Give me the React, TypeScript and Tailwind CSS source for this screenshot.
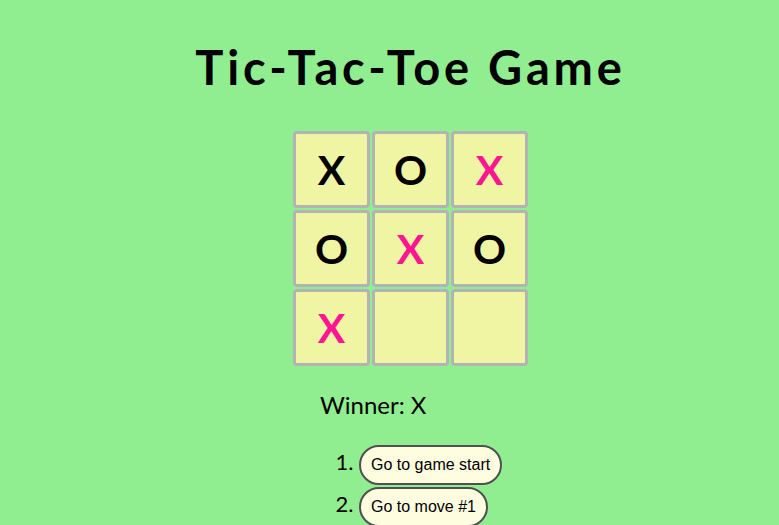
const squares: (string | null)[] = ['X', 'O', 'X', 'O', 'X', 'O', 'X', null, null]

function Square({ value, index }: { value: string | null; index: number }) {
  // first X on the board is rendered black, the rest pink
  const color = value === 'X' && index !== 0 ? 'text-[#ff1493]' : 'text-black'
  return (
    <button
      type="button"
      className={`flex h-[77px] w-[77px] items-center justify-center rounded-[4px] border-[3px] border-[#b3b3b3] bg-[#eff5a3] text-[41px] font-bold leading-none ${color}`}
    >
      {value}
    </button>
  )
}

export default function App() {
  const moves = ['Go to game start', 'Go to move #1']

  return (
    <div
      className="min-h-[525px] bg-[#90ee90] pl-[42px] text-black"
      style={{ fontFamily: 'Lato, "Noto Sans", sans-serif' }}
    >
      <div className="flex flex-col items-center pt-[44px]">
        <h1 className="text-[47px] font-bold leading-none tracking-[3.8px]">Tic-Tac-Toe Game</h1>

        <div className="mt-[40px] w-[235px]">
          <div className="grid grid-cols-3 gap-[2px]">
            {squares.map((value, i) => (
              <Square key={i} value={value} index={i} />
            ))}
          </div>

          <div className="pl-[27px] pt-[27px]">
            <div className="text-[24px] leading-none">Winner: X</div>
            <ol className="mt-[28px] flex list-decimal flex-col gap-[2px] pl-[39px] text-[22px]">
              {moves.map((m) => (
                <li key={m}>
                  <button
                    type="button"
                    className="whitespace-nowrap rounded-full border-2 border-[#505050] bg-[#fffde0] px-[10px] py-[9px] align-baseline text-[16px] leading-[18px] text-black"
                    style={{ fontFamily: '"Liberation Sans", Arial, sans-serif' }}
                  >
                    {m}
                  </button>
                </li>
              ))}
            </ol>
          </div>
        </div>
      </div>
    </div>
  )
}
